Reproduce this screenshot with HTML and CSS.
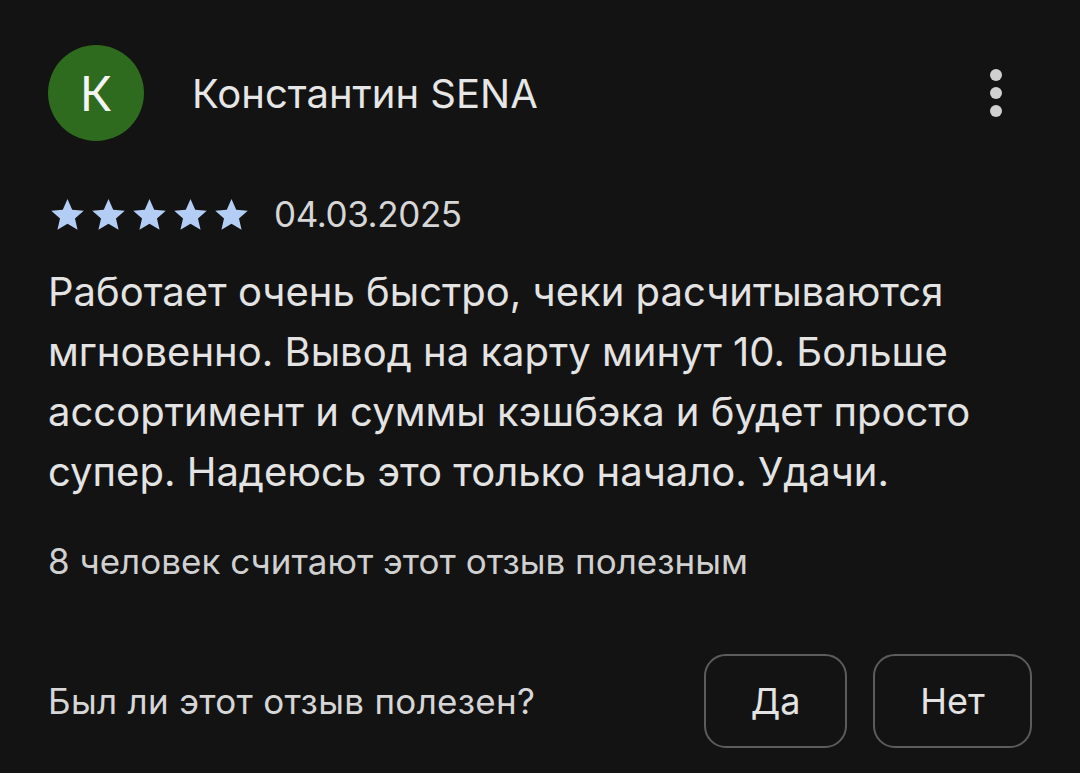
FILE: index.html
```html
<!DOCTYPE html>
<html lang="ru">
<head>
    <meta charset="UTF-8">
    <meta name="viewport" content="width=device-width, initial-scale=1.0">
    <title>Отзыв</title>
    <link rel="stylesheet" href="styles.css">
</head>
<body>
    <div class="review">
        <div class="header">
            <div class="avatar">К</div>
            <div class="name">Константин SENA</div>
            <div class="menu">
                <span class="dot"></span>
                <span class="dot"></span>
                <span class="dot"></span>
            </div>
        </div>
        <div class="meta">
            <div class="stars">
                <svg viewBox="0 0 24 24"><path d="M12 2.5l2.9 6.6 7.1.6-5.4 4.7 1.6 7-6.2-3.7-6.2 3.7 1.6-7L2 9.7l7.1-.6z"/></svg>
                <svg viewBox="0 0 24 24"><path d="M12 2.5l2.9 6.6 7.1.6-5.4 4.7 1.6 7-6.2-3.7-6.2 3.7 1.6-7L2 9.7l7.1-.6z"/></svg>
                <svg viewBox="0 0 24 24"><path d="M12 2.5l2.9 6.6 7.1.6-5.4 4.7 1.6 7-6.2-3.7-6.2 3.7 1.6-7L2 9.7l7.1-.6z"/></svg>
                <svg viewBox="0 0 24 24"><path d="M12 2.5l2.9 6.6 7.1.6-5.4 4.7 1.6 7-6.2-3.7-6.2 3.7 1.6-7L2 9.7l7.1-.6z"/></svg>
                <svg viewBox="0 0 24 24"><path d="M12 2.5l2.9 6.6 7.1.6-5.4 4.7 1.6 7-6.2-3.7-6.2 3.7 1.6-7L2 9.7l7.1-.6z"/></svg>
            </div>
            <span class="date">04.03.2025</span>
        </div>
        <p class="text">Работает очень быстро, чеки расчитываются мгновенно. Вывод на карту минут 10. Больше ассортимент и суммы кэшбэка и будет просто супер. Надеюсь это только начало. Удачи.</p>
        <div class="helpful">8 человек считают этот отзыв полезным</div>
        <div class="feedback">
            <span class="question">Был ли этот отзыв полезен?</span>
            <div class="buttons">
                <button class="btn btn-yes">Да</button>
                <button class="btn btn-no">Нет</button>
            </div>
        </div>
    </div>
</body>
</html>
```

FILE: styles.css
```css
body {
    margin: 0;
    background-color: #131313;
    color: #e3e3e3;
    font-family: Inter, Roboto, sans-serif;
}

.review {
    width: 1080px;
    height: 773px;
    box-sizing: border-box;
    padding: 45px 48px 0 48px;
}

.header {
    display: flex;
    align-items: center;
    height: 96px;
}

.avatar {
    width: 96px;
    height: 96px;
    border-radius: 50%;
    background-color: #2f6b1f;
    color: #f4f4f4;
    display: flex;
    justify-content: center;
    align-items: center;
    font-size: 48px;
    flex-shrink: 0;
}

.name {
    margin-left: 48px;
    font-size: 40px;
    color: #e6e6e6;
    flex: 1;
}

.menu {
    display: flex;
    flex-direction: column;
    align-items: center;
    gap: 6px;
    margin-right: 30px;
}

.dot {
    width: 12px;
    height: 12px;
    border-radius: 50%;
    background-color: #d0d0d0;
}

.meta {
    display: flex;
    align-items: center;
    margin-top: 52px;
}

.stars {
    display: flex;
    gap: 2px;
}

.stars svg {
    width: 39px;
    height: 39px;
    fill: #b4cdf5;
}

.date {
    margin-left: 23px;
    font-size: 35px;
    letter-spacing: -0.4px;
    color: #d6d6d6;
}

.text {
    margin: 27px 0 0 0;
    font-size: 40px;
    line-height: 60px;
    color: #e3e3e3;
    width: 960px;
}

.helpful {
    margin-top: 38px;
    font-size: 35px;
    color: #d0d0d0;
}

.feedback {
    display: flex;
    justify-content: space-between;
    align-items: center;
    margin-top: 72px;
}

.question {
    font-size: 35px;
    letter-spacing: 0.3px;
    color: #d6d6d6;
}

.buttons {
    display: flex;
    gap: 26px;
}

.btn {
    height: 94px;
    border: 2px solid #5c5c5c;
    border-radius: 22px;
    background-color: transparent;
    color: #e3e3e3;
    font-family: Inter, Roboto, sans-serif;
    font-size: 36px;
    cursor: pointer;
}

.btn-yes {
    width: 143px;
}

.btn-no {
    width: 159px;
}
```
